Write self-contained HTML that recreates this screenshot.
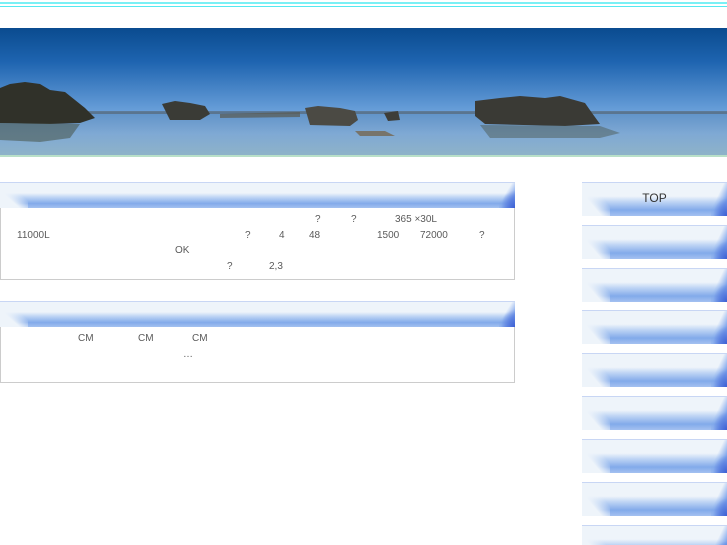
<!DOCTYPE html><html><head><meta charset="utf-8"><style>
html,body{margin:0;width:727px;height:545px;overflow:hidden;background:#fff}
body{font-family:"Liberation Sans",sans-serif;font-size:10px;color:#5a5a5a;position:relative}
.a{position:absolute}
.g{background:
 radial-gradient(ellipse 14px 18px at 100% 100%,#3c5fd4,rgba(60,95,212,0) 100%) ,
 linear-gradient(to top left,rgba(120,160,235,1) 25%,rgba(120,160,235,0) 60%) right top/16px 100% no-repeat,
 linear-gradient(to top right,#eef4fa 35%,rgba(238,244,250,0) 65%) left top/28px 100% no-repeat,
 linear-gradient(180deg,#eef4fa 0,#eef4fa 40%,#bcd3f4 58%,#82aaea 82%,#a4c1f0 100%);
 box-sizing:border-box;border-top:1px solid #c8d6f4}
.btn{position:absolute;left:582px;width:145px;height:34px;text-align:center;font-size:12px;line-height:30px;color:#333}
</style></head><body>
<div class="a" style="left:0;top:2px;width:727px;height:2px;background:#7af0f5"></div>
<div class="a" style="left:0;top:6px;width:727px;height:1px;background:#55e8f0"></div>
<svg class="a" style="left:0;top:28px" width="727" height="130">
<defs><linearGradient id="s" x1="0" y1="0" x2="0" y2="1"><stop offset="0" stop-color="#0a4b8f"/><stop offset=".4" stop-color="#1e64b0"/><stop offset="1" stop-color="#6aa0da"/></linearGradient>
<linearGradient id="w" x1="0" y1="0" x2="0" y2="1"><stop offset="0" stop-color="#5f92c8"/><stop offset=".5" stop-color="#7fa9d4"/><stop offset="1" stop-color="#8fb3c8"/></linearGradient></defs>
<rect width="727" height="84" fill="url(#s)"/>
<rect y="84" width="727" height="44" fill="url(#w)"/>
<rect y="83" width="727" height="3" fill="#55606a" opacity=".6"/>
<path d="M0 60 L10 56 L25 54 L40 56 L50 62 L65 64 L75 72 L85 80 L95 90 L80 95 L50 96 L0 95Z" fill="#303129"/>
<path d="M0 95 L80 96 L70 110 L40 114 L0 112Z" fill="#4b5a52" opacity=".6"/>
<path d="M162 76 L175 73 L190 75 L205 78 L210 86 L200 92 L170 92 Z" fill="#3a3b36"/>
<path d="M220 86 L300 84 L300 89 L220 90Z" fill="#5a5a50" opacity=".7"/>
<path d="M305 80 L318 78 L340 80 L355 83 L358 92 L350 98 L310 97Z" fill="#4b4a44"/>
<path d="M384 85 L398 83 L400 92 L388 93Z" fill="#3d3d38"/>
<path d="M475 73 L500 70 L520 68 L545 70 L560 68 L585 75 L592 85 L600 96 L565 98 L485 96 L475 88Z" fill="#3a3a35"/>
<path d="M480 97 L600 98 L620 105 L600 110 L490 110Z" fill="#4e5b55" opacity=".5"/>
<path d="M355 103 L385 103 L395 108 L360 108Z" fill="#77746b"/>
<rect y="127" width="727" height="2" fill="#b9e0c8"/>
</svg>
<div class="a" style="left:0;top:182px;width:513px;height:96px;border:1px solid #ccc"></div>
<div class="a g" style="left:0;top:182px;width:515px;height:26px"></div>
<div class="a" style="left:315px;top:214px">?</div><div class="a" style="left:351px;top:214px">?</div><div class="a" style="left:395px;top:214px">365 ×30L</div>
<div class="a" style="left:17px;top:230px">11000L</div><div class="a" style="left:245px;top:230px">?</div><div class="a" style="left:279px;top:230px">4</div><div class="a" style="left:309px;top:230px">48</div><div class="a" style="left:377px;top:230px">1500</div><div class="a" style="left:420px;top:230px">72000</div><div class="a" style="left:479px;top:230px">?</div>
<div class="a" style="left:175px;top:245px">OK</div>
<div class="a" style="left:227px;top:261px">?</div><div class="a" style="left:269px;top:261px">2,3</div>
<div class="a" style="left:0;top:301px;width:513px;height:80px;border:1px solid #ccc"></div>
<div class="a g" style="left:0;top:301px;width:515px;height:26px"></div>
<div class="a" style="left:78px;top:333px">CM</div><div class="a" style="left:138px;top:333px">CM</div><div class="a" style="left:192px;top:333px">CM</div>
<div class="a" style="left:183px;top:349px">…</div>
<div class="btn g" style="top:182px">TOP</div>
<div class="btn g" style="top:225px"></div><div class="btn g" style="top:268px"></div><div class="btn g" style="top:310px"></div><div class="btn g" style="top:353px"></div><div class="btn g" style="top:396px"></div><div class="btn g" style="top:439px"></div><div class="btn g" style="top:482px"></div><div class="btn g" style="top:525px"></div>
</body></html>
